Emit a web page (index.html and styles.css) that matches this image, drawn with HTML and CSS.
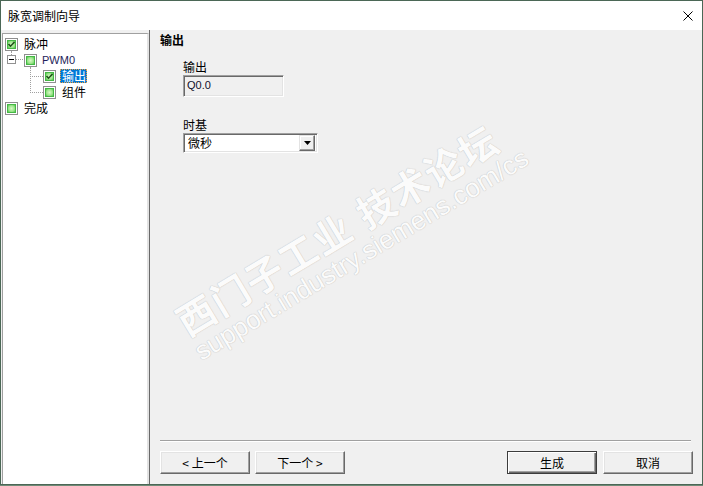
FILE: index.html
```html
<!DOCTYPE html>
<html lang="zh">
<head>
<meta charset="utf-8">
<title>脉宽调制向导</title>
<link rel="stylesheet" href="styles.css">
</head>
<body>
<svg class="defs" width="0" height="0" aria-hidden="true">
  <defs>
    <radialGradient id="gr" cx="50%" cy="50%" r="60%">
      <stop offset="0" stop-color="#d8f8c6"/>
      <stop offset="0.55" stop-color="#9be68a"/>
      <stop offset="1" stop-color="#3fb83f"/>
    </radialGradient>
    <symbol id="cb" viewBox="0 0 13 13">
      <rect x="0.5" y="0.5" width="12" height="12" fill="#fff" stroke="#8f8f8f"/>
      <rect x="2" y="2" width="9" height="9" fill="url(#gr)"/>
      <rect x="2.5" y="2.5" width="8" height="8" fill="none" stroke="#45b845" stroke-width="1"/>
    </symbol>
    <symbol id="cbc" viewBox="0 0 13 13">
      <rect x="0.5" y="0.5" width="12" height="12" fill="#fff" stroke="#8f8f8f"/>
      <rect x="2" y="2" width="9" height="9" fill="url(#gr)"/>
      <rect x="2.5" y="2.5" width="8" height="8" fill="none" stroke="#45b845" stroke-width="1"/>
      <polyline points="3.5,6 5.5,8.2 9.5,4" fill="none" stroke="#1f4f1a" stroke-width="1.6"/>
    </symbol>
  </defs>
</svg>
<div class="window">
  <div class="titlebar">
    <span class="title">脉宽调制向导</span>
    <svg class="close" width="10" height="10" viewBox="0 0 10 10"><path d="M0.5 0.5 L9.5 9.5 M9.5 0.5 L0.5 9.5" stroke="#000" stroke-width="1"/></svg>
  </div>
  <div class="body">
    <div class="tree">
      <div class="row">
        <svg class="g" width="18" height="16" viewBox="0 0 18 16">
          <use href="#cbc" x="2" y="2" width="13" height="13"/>
          <line x1="8.5" y1="15" x2="8.5" y2="16" class="dot"/>
        </svg>
        <span class="lbl l-a">脉冲</span>
      </div>
      <div class="row">
        <svg class="g" width="36" height="16" viewBox="0 0 36 16">
          <line x1="8.5" y1="0" x2="8.5" y2="3" class="dot"/>
          <rect x="4.5" y="3.5" width="8" height="8" fill="#fff" stroke="#919191"/>
          <line x1="6" y1="7.5" x2="11" y2="7.5" stroke="#000"/>
          <line x1="13" y1="7.5" x2="21" y2="7.5" class="dot"/>
          <use href="#cb" x="21" y="2" width="13" height="13"/>
          <line x1="27.5" y1="15" x2="27.5" y2="16" class="dot"/>
        </svg>
        <span class="lbl l-latin">PWM0</span>
      </div>
      <div class="row">
        <svg class="g" width="55" height="16" viewBox="0 0 55 16">
          <line x1="27.5" y1="0" x2="27.5" y2="16" class="dot"/>
          <line x1="29" y1="8.5" x2="40" y2="8.5" class="dot"/>
          <use href="#cbc" x="40" y="2" width="13" height="13"/>
        </svg>
        <span class="lbl l-sel">输出</span>
      </div>
      <div class="row">
        <svg class="g" width="55" height="16" viewBox="0 0 55 16">
          <line x1="27.5" y1="0" x2="27.5" y2="9" class="dot"/>
          <line x1="29" y1="8.5" x2="40" y2="8.5" class="dot"/>
          <use href="#cb" x="40" y="2" width="13" height="13"/>
        </svg>
        <span class="lbl l-c">组件</span>
      </div>
      <div class="row">
        <svg class="g" width="18" height="16" viewBox="0 0 18 16">
          <use href="#cb" x="2" y="2" width="13" height="13"/>
        </svg>
        <span class="lbl l-a">完成</span>
      </div>
    </div>
    <div class="main">
      <div class="watermark">
        <div class="wm1">西门子工业<span class="wgap"></span>技术论坛</div>
        <div class="wm2">support.industry.siemens.com/cs</div>
      </div>
      <div class="heading">输出</div>
      <div class="form">
        <div class="label first">输出</div>
        <div class="textbox">Q0.0</div>
        <div class="label second">时基</div>
        <div class="select">
          <span class="val">微秒</span>
          <span class="dd"><svg width="7" height="4" viewBox="0 0 7 4"><path d="M0 0 H7 L3.5 4 Z" fill="#000"/></svg></span>
        </div>
      </div>
      <div class="spacer"></div>
      <div class="sep"></div>
      <div class="buttons">
        <div class="grp">
          <div class="btn">&lt; 上一个</div>
          <div class="btn">下一个 &gt;</div>
        </div>
        <div class="grp">
          <div class="btn default">生成</div>
          <div class="btn">取消</div>
        </div>
      </div>
    </div>
  </div>
</div>
</body>
</html>
```

FILE: styles.css
```css
* { box-sizing: border-box; }
html, body { margin: 0; padding: 0; background: #6f8a76; }
body {
  font-family: "Noto Sans CJK SC", "Liberation Sans", sans-serif;
  font-size: 12px;
  color: #000;
}
.defs { position: absolute; width: 0; height: 0; overflow: hidden; }
.window {
  width: 703px;
  height: 485px;
  border: 1px solid #4b6756;
  display: flex;
  flex-direction: column;
  background: #f0f0f0;
}
.titlebar {
  height: 29px;
  background: #fff;
  display: flex;
  align-items: center;
  justify-content: space-between;
  padding: 0 9px 0 7px;
}
.title { line-height: 16px; }
.close { display: block; margin-top: 0; }
.body {
  flex: 1;
  display: flex;
  padding-top: 3px;
  min-height: 0;
}
.tree {
  width: 147px;
  margin-left: 1px;
  background: #fff;
  border-left: 1px solid #a0a0a0;
  border-top: 1px solid #a0a0a0;
  border-right: 2px solid #e3e3e3;
  padding-top: 2px;
}
.row {
  display: flex;
  align-items: flex-start;
  height: 16px;
}
.g { display: block; flex: none; }
.dot { stroke: #a0a0a0; stroke-width: 1; stroke-dasharray: 1 1; }
.lbl { line-height: 16px; white-space: nowrap; }
.l-a { margin-left: 3px; }
.l-latin {
  margin-left: 3px;
  font-family: "Liberation Sans", sans-serif;
  font-size: 11px;
  color: #1e1e5a;
}
.l-sel {
  margin-left: 2px;
  margin-top: 1px;
  height: 14px;
  line-height: 14px;
  padding: 0 1px 0 2px;
  background: #0078d7;
  color: #fff;
  outline: 1px dotted #f0a040;
  outline-offset: -1px;
}
.l-c { margin-left: 4px; }
.main {
  flex: 1;
  position: relative;
  margin-top: -3px;
  border-left: 1px solid #696969;
  display: flex;
  flex-direction: column;
  padding: 2px 9px 10px 10px;
  overflow: hidden;
}
.heading { font-weight: bold; line-height: 16px; position: relative; }
.form { margin-left: 23px; display: flex; flex-direction: column; align-items: flex-start; position: relative; }
.label { line-height: 16px; }
.label.first { margin-top: 11px; }
.label.second { margin-top: 20px; }
.textbox {
  width: 101px;
  height: 22px;
  border: 1px solid;
  border-color: #a0a0a0 #fff #fff #a0a0a0;
  box-shadow: inset 1px 1px 0 #696969, inset -1px -1px 0 #e3e3e3;
  background: #f0f0f0;
  font-family: "Liberation Sans", sans-serif;
  font-size: 11px;
  line-height: 18px;
  padding-left: 3px;
  color: #10102a;
}
.select {
  width: 135px;
  height: 20px;
  border: 1px solid;
  border-color: #a0a0a0 #fff #fff #a0a0a0;
  box-shadow: inset 1px 1px 0 #696969, inset -1px -1px 0 #e3e3e3;
  background: #fff;
  display: flex;
  align-items: center;
  justify-content: space-between;
  padding: 1px 2px 1px 4px;
}
.val { line-height: 16px; }
.dd {
  width: 16px;
  height: 16px;
  background: #f0f0f0;
  border: 1px solid;
  border-color: #e3e3e3 #696969 #696969 #e3e3e3;
  box-shadow: inset -1px -1px 0 #a0a0a0, inset 1px 1px 0 #fff;
  display: flex;
  align-items: center;
  justify-content: center;
}
.dd svg { display: block; }
.spacer { flex: 1; }
.sep {
  height: 2px;
  border-top: 1px solid #a0a0a0;
  border-bottom: 1px solid #fff;
  margin-right: 2px;
  position: relative;
}
.buttons {
  margin-top: 9px;
  display: flex;
  justify-content: space-between;
  position: relative;
}
.grp { display: flex; gap: 5px; }
.grp + .grp { gap: 6px; }
.btn {
  width: 90px;
  height: 23px;
  background: #f0f0f0;
  border: 1px solid;
  border-color: #fff #696969 #696969 #fff;
  box-shadow: inset -1px -1px 0 #a0a0a0, inset 1px 1px 0 #e3e3e3;
  display: flex;
  align-items: center;
  justify-content: center;
  line-height: 16px;
}
.btn.default {
  border-color: #3c3c3c;
  box-shadow: inset 1px 1px 0 #fff, inset -1px -1px 0 #696969, inset -2px -2px 0 #a0a0a0;
}
.watermark {
  position: absolute;
  left: 19px;
  top: 277px;
  transform-origin: 0 0;
  transform: rotate(-31deg);
  color: #fbfbfb;
  text-shadow: 0 0 1px #c4c4c4, 0 0 1px #c4c4c4;
  white-space: nowrap;
  pointer-events: none;
}
.wm1 { font-size: 38px; line-height: 40px; letter-spacing: 1.5px; font-weight: bold; }
.wgap { display: inline-block; width: 12px; }
.wm2 { font-family: "Liberation Sans", sans-serif; font-size: 26.5px; line-height: 28px; }
```
